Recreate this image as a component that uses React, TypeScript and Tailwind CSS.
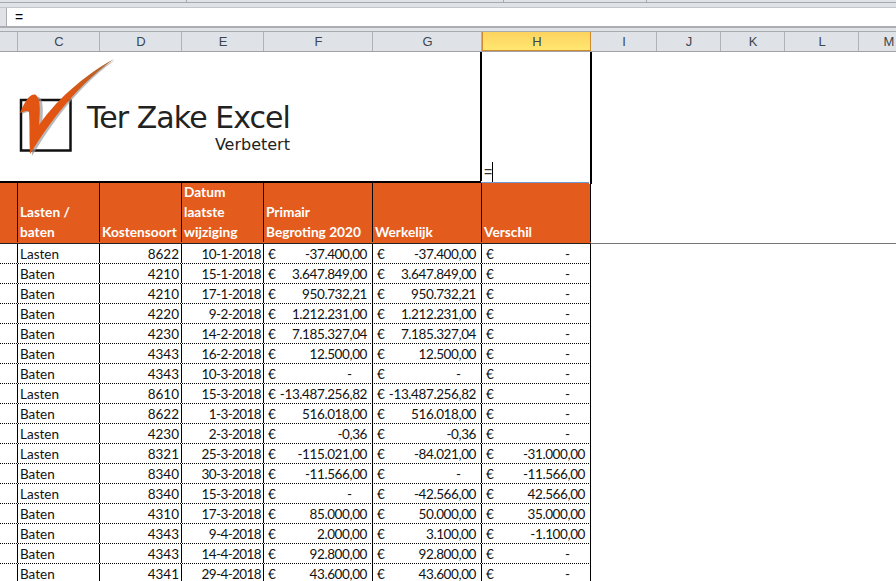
const columns = [
  { name: "", width: "w-[18px]" },
  { name: "C", width: "w-[82px]" },
  { name: "D", width: "w-[82px]" },
  { name: "E", width: "w-[82px]" },
  { name: "F", width: "w-[109px]" },
  { name: "G", width: "w-[109px]" },
  { name: "H", width: "w-[109px]", active: true },
  { name: "I", width: "w-[66px]" },
  { name: "J", width: "w-[64px]" },
  { name: "K", width: "w-[64px]" },
  { name: "L", width: "w-[74px]" },
  { name: "M", width: "w-[60px]" },
];

const rows = [
  ["Lasten", "8622", "10-1-2018", "-37.400,00", "-37.400,00", "-"],
  ["Baten", "4210", "15-1-2018", "3.647.849,00", "3.647.849,00", "-"],
  ["Baten", "4210", "17-1-2018", "950.732,21", "950.732,21", "-"],
  ["Baten", "4220", "9-2-2018", "1.212.231,00", "1.212.231,00", "-"],
  ["Baten", "4230", "14-2-2018", "7.185.327,04", "7.185.327,04", "-"],
  ["Baten", "4343", "16-2-2018", "12.500,00", "12.500,00", "-"],
  ["Baten", "4343", "10-3-2018", "-", "-", "-"],
  ["Lasten", "8610", "15-3-2018", "-13.487.256,82", "-13.487.256,82", "-"],
  ["Baten", "8622", "1-3-2018", "516.018,00", "516.018,00", "-"],
  ["Lasten", "4230", "2-3-2018", "-0,36", "-0,36", "-"],
  ["Lasten", "8321", "25-3-2018", "-115.021,00", "-84.021,00", "-31.000,00"],
  ["Baten", "8340", "30-3-2018", "-11.566,00", "-", "-11.566,00"],
  ["Lasten", "8340", "15-3-2018", "-", "-42.566,00", "42.566,00"],
  ["Baten", "4310", "17-3-2018", "85.000,00", "50.000,00", "35.000,00"],
  ["Baten", "4343", "9-4-2018", "2.000,00", "3.100,00", "-1.100,00"],
  ["Baten", "4343", "14-4-2018", "92.800,00", "92.800,00", "-"],
  ["Baten", "4341", "29-4-2018", "43.600,00", "43.600,00", "-"],
];

function Money({ value }: { value: string }) {
  const dash = value === "-";
  return (
    <div className="w-[109px] shrink-0 border-r border-black flex justify-between pl-[4px] pr-[5px]">
      <span>€</span>
      <span className={dash ? "pr-[15px]" : "tracking-[-0.4px]"}>{value}</span>
    </div>
  );
}

function Logo() {
  return (
    <div className="flex items-start w-[480px] pl-[18px] pt-[6px]">
      <svg width="100" height="100" viewBox="18 58 100 100" className="shrink-0">
        <defs>
          <linearGradient id="tick" x1="0" y1="1" x2="1" y2="0">
            <stop offset="0.55" stopColor="#e25412" />
            <stop offset="1" stopColor="#a8682c" />
          </linearGradient>
        </defs>
        <rect x="21" y="100" width="49.5" height="50.5" fill="none" stroke="#111" strokeWidth="2.5" />
        <path d="M115 60C91 73 62 96 42 126C43 113 44 100 39 97C33 94 26 104 22 114C26 112 29 111 31 113C32 126 31 141 32 156C44 137 71 91 115 60Z" fill="#9a9a9a" opacity="0.7" />
        <path d="M114 59C90 72 60 95 39 125C40 112 41 100 36 95C30 92 24 103 20 113C25 111 28 110 29 112C30 125 29 140 30 154C42 135 70 90 114 59Z" fill="url(#tick)" />
      </svg>
      <div className="flex flex-col items-end ml-[-31px] pt-[45px] text-[#222] font-['DejaVu_Sans',sans-serif]">
        <span className="text-[30px] leading-[30px] tracking-[-0.95px] whitespace-nowrap">Ter Zake Excel</span>
        <span className="text-[16px] leading-[16px] mt-[4px] whitespace-nowrap">Verbetert</span>
      </div>
    </div>
  );
}

export default function App() {
  return (
    <div className="w-[896px] h-[581px] overflow-hidden bg-white font-['Lato',sans-serif] text-[13.5px] text-[#111]">
      <div className="h-[3px] flex bg-[#dfe3e8] border-b border-[#a8abae]">
        <div className="w-[187px] border-r border-[#a8abae]" />
        <div className="w-[317px] border-r border-[#a8abae]" />
        <div className="w-[143px] border-r border-[#a8abae]" />
      </div>
      <div className="h-[4px] bg-[#dfe3e8]" />
      <div className="h-[21px] flex bg-white border-b-2 border-[#abadb0] border-t border-t-[#c4c6c9]">
        <div className="w-[7px] border-r border-[#abadb0] bg-[#dfe3e8]" />
        <div className="pl-[8px] text-[14px] leading-[18px] text-black font-['Liberation_Sans',sans-serif]">=</div>
      </div>
      <div className="h-[3px] bg-[#dfe3e8]" />

      <div className="flex h-[21px] bg-[#dfe3e8] border-t border-[#a8abae] border-b border-b-[#a0a2a5] text-[13px] leading-[19px] text-[#3c4650] font-['Liberation_Sans',sans-serif]">
        {columns.map((c) => (
          <div
            key={c.name}
            className={`${c.width} shrink-0 text-center pl-px border-r ${
              c.active
                ? "bg-gradient-to-b from-[#fdd35f] to-[#ffe771] border-l border-[#d08a2e] border-b border-b-[#d08a2e]"
                : "border-[#b0b3b6]"
            }`}
          >
            {c.name}
          </div>
        ))}
      </div>

      <div className="flex h-[129px]">
        <Logo />
        <div className="w-[112px] shrink-0 border-x-2 border-black flex items-end pl-[2px]">
          <span className="text-[14px] leading-[20px] mb-[-1px] text-[#333] font-['Liberation_Sans',sans-serif]">=</span>
          <span className="w-px h-[20px] mb-[-1px] bg-black" />
        </div>
      </div>

      <div className="relative h-[2px] w-[592px] flex">
        <div className="w-[481px] bg-black" />
        <div className="flex-1 mt-[1px] bg-[#6d9bd1]" />
        <div className="absolute right-0 top-[-1px] w-[3px] h-[4px] bg-black border-l border-white" />
      </div>

      <div className="flex h-[61px] w-[591px] bg-[#e35c1e] text-white font-bold text-[13.7px] leading-[20px] border-b border-[#222] pb-[1px]">
        <div className="w-[18px] shrink-0 border-r border-black" />
        <div className="w-[82px] shrink-0 border-r border-black flex flex-col justify-end pl-[2px]">
          <span>Lasten /</span>
          <span>baten</span>
        </div>
        <div className="w-[82px] shrink-0 border-r border-black flex flex-col justify-end pl-[2px]">
          <span>Kostensoort</span>
        </div>
        <div className="w-[82px] shrink-0 border-r border-black flex flex-col justify-end pl-[2px]">
          <span>Datum</span>
          <span>laatste</span>
          <span>wijziging</span>
        </div>
        <div className="w-[109px] shrink-0 border-r border-black flex flex-col justify-end pl-[2px]">
          <span>Primair</span>
          <span>Begroting 2020</span>
        </div>
        <div className="w-[109px] shrink-0 border-r border-black flex flex-col justify-end pl-[2px]">
          <span>Werkelijk</span>
        </div>
        <div className="w-[109px] shrink-0 border-r border-black flex flex-col justify-end pl-[2px]">
          <span>Verschil</span>
        </div>
      </div>
      <div className="h-px bg-[#777] -mt-px ml-[591px]" />

      <div className="w-[591px]">
        {rows.map((r, i) => (
          <div key={i} className="flex h-[20px] leading-[20px] border-b border-dotted border-black whitespace-nowrap">
            <div className="w-[18px] shrink-0 border-r border-black" />
            <div className="w-[82px] shrink-0 border-r border-black pl-[2px]">{r[0]}</div>
            <div className="w-[82px] shrink-0 border-r border-black text-right pr-[2px]">{r[1]}</div>
            <div className="w-[82px] shrink-0 border-r border-black text-right pr-[2px] tracking-[-0.6px]">{r[2]}</div>
            <Money value={r[3]} />
            <Money value={r[4]} />
            <Money value={r[5]} />
          </div>
        ))}
      </div>
    </div>
  );
}
